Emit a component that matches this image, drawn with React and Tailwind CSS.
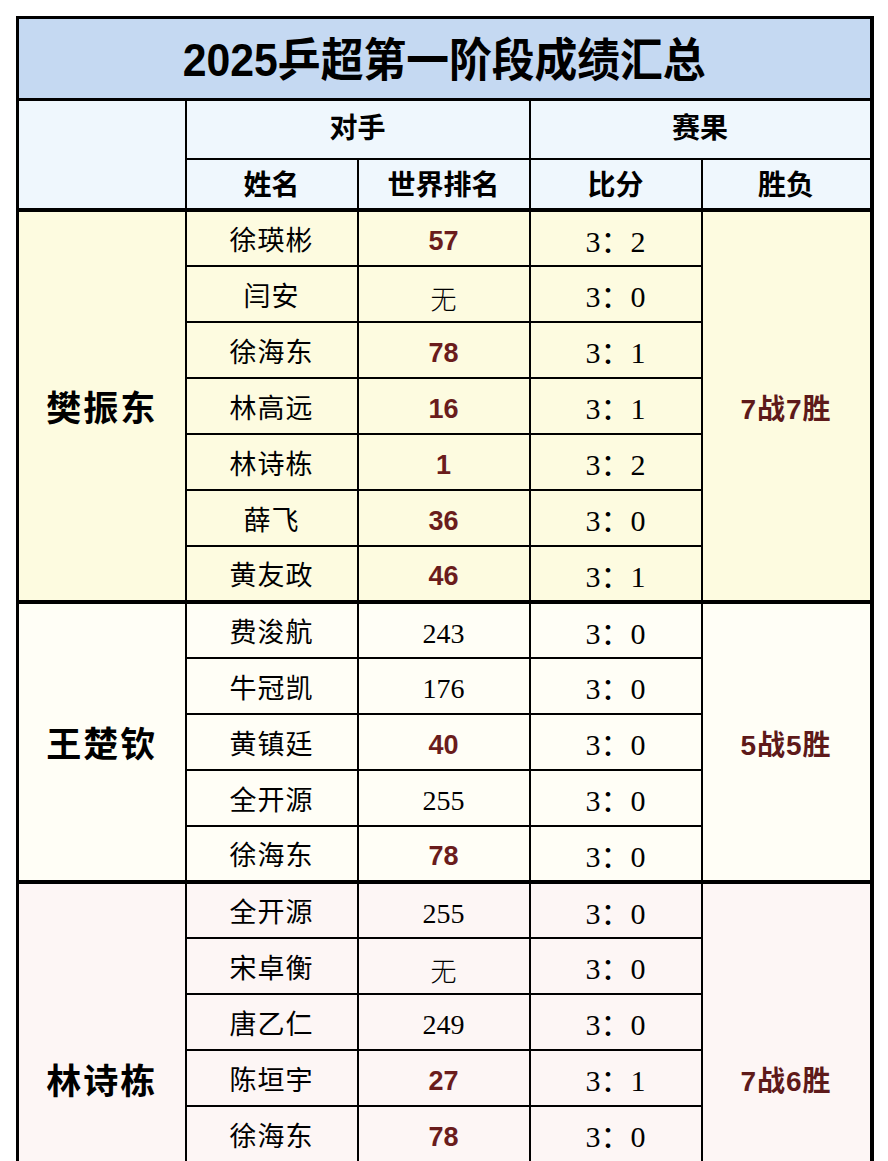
import React from 'react';

const groups = [
  {
    player: '樊振东',
    result: '7战7胜',
    bg: 'bg-[#fdfbe0]',
    rows: [
      ['徐瑛彬', '57', true, '3：2'],
      ['闫安', '无', false, '3：0'],
      ['徐海东', '78', true, '3：1'],
      ['林高远', '16', true, '3：1'],
      ['林诗栋', '1', true, '3：2'],
      ['薛飞', '36', true, '3：0'],
      ['黄友政', '46', true, '3：1'],
    ],
  },
  {
    player: '王楚钦',
    result: '5战5胜',
    bg: 'bg-[#fffef6]',
    rows: [
      ['费浚航', '243', false, '3：0'],
      ['牛冠凯', '176', false, '3：0'],
      ['黄镇廷', '40', true, '3：0'],
      ['全开源', '255', false, '3：0'],
      ['徐海东', '78', true, '3：0'],
    ],
  },
  {
    player: '林诗栋',
    result: '7战6胜',
    bg: 'bg-[#fdf6f5]',
    rows: [
      ['全开源', '255', false, '3：0'],
      ['宋卓衡', '无', false, '3：0'],
      ['唐乙仁', '249', false, '3：0'],
      ['陈垣宇', '27', true, '3：1'],
      ['徐海东', '78', true, '3：0'],
      ['', '', false, ''],
      ['', '', false, ''],
    ],
  },
];

const sans = "font-['Liberation_Sans','Noto_Sans_CJK_SC',sans-serif]";
const serif = "font-['Liberation_Serif','Noto_Sans_CJK_SC',serif]";

function Rank({ value, bold }) {
  if (bold) {
    return <span className={`${sans} font-bold text-[27px] text-[#6a1c1c]`}>{value}</span>;
  }
  if (value === '无') {
    return <span className="font-['Noto_Sans_CJK_SC',sans-serif] font-light text-[26px] text-black">{value}</span>;
  }
  return <span className={`${serif} text-[28px] text-black`}>{value}</span>;
}

export default function App() {
  return (
    <div className="min-h-screen bg-white pt-[16px] pl-[16px]">
      <table className="w-[854px] table-fixed border-collapse border-[3px] border-r-4 border-black text-center">
        <colgroup>
          <col className="w-[168px]" />
          <col className="w-[172px]" />
          <col className="w-[172px]" />
          <col className="w-[172px]" />
          <col className="w-[170px]" />
        </colgroup>
        <thead>
          <tr>
            <th colSpan={5} className="h-[82px] border-b-[3px] border-black bg-[#c5d9f2] p-0 pt-[4px]">
              <span className={`${sans} inline-block scale-x-[0.93] font-bold text-[46px] text-black`}>
                2025乒超第一阶段成绩汇总
              </span>
            </th>
          </tr>
          <tr className="bg-[#eff7fd]">
            <th rowSpan={2} className="border-2 border-black p-0" />
            <th colSpan={2} className={`h-[59px] border-2 border-black p-0 ${sans} font-bold text-[28px] text-black`}>
              对手
            </th>
            <th colSpan={2} className={`border-2 border-black p-0 ${sans} font-bold text-[28px] text-black`}>
              赛果
            </th>
          </tr>
          <tr className="bg-[#eff7fd]">
            {['姓名', '世界排名', '比分', '胜负'].map((h) => (
              <th key={h} className={`h-[51px] border-2 border-b-4 border-black p-0 pt-[4px] ${sans} font-bold text-[28px] text-black`}>
                {h}
              </th>
            ))}
          </tr>
        </thead>
        <tbody>
          {groups.map((g) =>
            g.rows.map((r, i) => (
              <tr key={g.player + i} className={g.bg}>
                {i === 0 && (
                  <td
                    rowSpan={g.rows.length}
                    className={`border-2 border-t-4 border-black p-0 pt-[8px] ${sans} font-bold text-[35px] tracking-[2px] text-black`}
                  >
                    {g.player}
                  </td>
                )}
                <td className={`h-[56px] border-2 ${i === 0 ? 'border-t-4' : ''} border-black p-0 pt-[7px] ${sans} text-[27px] tracking-[1px] text-black`}>
                  {r[0]}
                </td>
                <td className={`border-2 ${i === 0 ? 'border-t-4' : ''} border-black p-0 pt-[7px]`}>
                  <Rank value={r[1]} bold={r[2]} />
                </td>
                <td className={`border-2 ${i === 0 ? 'border-t-4' : ''} border-black p-0 pt-[6px] ${serif} text-[30px] text-black`}>
                  {r[3]}
                </td>
                {i === 0 && (
                  <td
                    rowSpan={g.rows.length}
                    className={`border-2 border-t-4 border-black p-0 pt-[8px] ${sans} font-bold text-[28px] tracking-[1px] text-[#5e1a1a]`}
                  >
                    {g.result}
                  </td>
                )}
              </tr>
            ))
          )}
        </tbody>
      </table>
    </div>
  );
}
